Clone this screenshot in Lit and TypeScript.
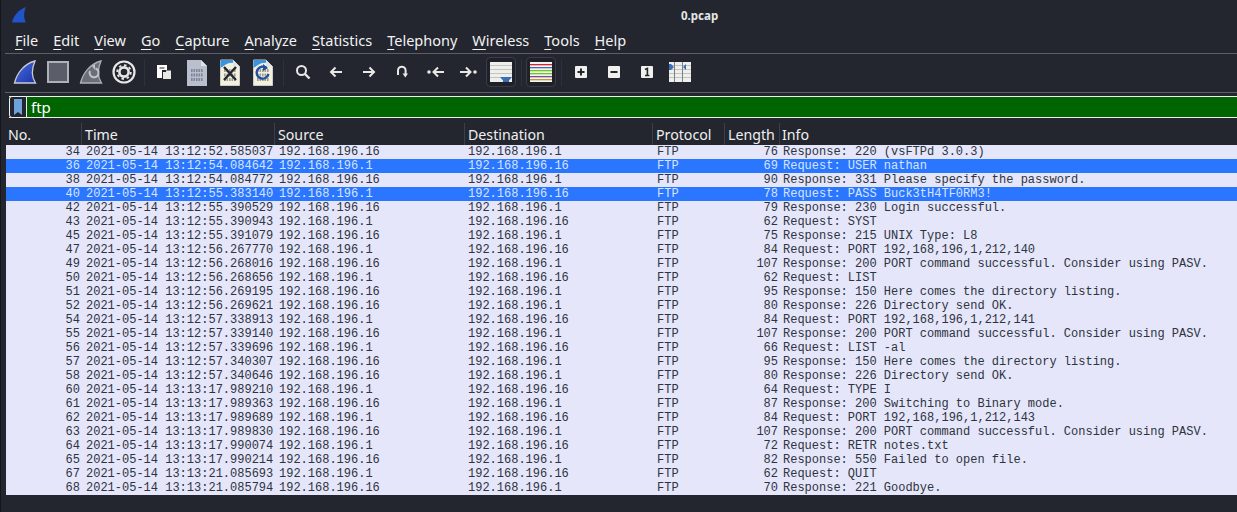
import { LitElement, html, css, svg } from "lit";
import { customElement } from "lit/decorators.js";

const A = "192.168.196.16";
const B = "192.168.196.1";
type R = [number, string, number, string];
const S = (n: number, t: string, l: number, i: string): R => [n, t, l, i];
const rows: R[] = [
  S(34, "13:12:52.585037", 76, "Response: 220 (vsFTPd 3.0.3)"),
  S(36, "13:12:54.084642", 69, "Request: USER nathan"),
  S(38, "13:12:54.084772", 90, "Response: 331 Please specify the password."),
  S(40, "13:12:55.383140", 78, "Request: PASS Buck3tH4TF0RM3!"),
  S(42, "13:12:55.390529", 79, "Response: 230 Login successful."),
  S(43, "13:12:55.390943", 62, "Request: SYST"),
  S(45, "13:12:55.391079", 75, "Response: 215 UNIX Type: L8"),
  S(47, "13:12:56.267770", 84, "Request: PORT 192,168,196,1,212,140"),
  S(49, "13:12:56.268016", 107, "Response: 200 PORT command successful. Consider using PASV."),
  S(50, "13:12:56.268656", 62, "Request: LIST"),
  S(51, "13:12:56.269195", 95, "Response: 150 Here comes the directory listing."),
  S(52, "13:12:56.269621", 80, "Response: 226 Directory send OK."),
  S(54, "13:12:57.338913", 84, "Request: PORT 192,168,196,1,212,141"),
  S(55, "13:12:57.339140", 107, "Response: 200 PORT command successful. Consider using PASV."),
  S(56, "13:12:57.339696", 66, "Request: LIST -al"),
  S(57, "13:12:57.340307", 95, "Response: 150 Here comes the directory listing."),
  S(58, "13:12:57.340646", 80, "Response: 226 Directory send OK."),
  S(60, "13:13:17.989210", 64, "Request: TYPE I"),
  S(61, "13:13:17.989363", 87, "Response: 200 Switching to Binary mode."),
  S(62, "13:13:17.989689", 84, "Request: PORT 192,168,196,1,212,143"),
  S(63, "13:13:17.989830", 107, "Response: 200 PORT command successful. Consider using PASV."),
  S(64, "13:13:17.990074", 72, "Request: RETR notes.txt"),
  S(65, "13:13:17.990214", 82, "Response: 550 Failed to open file."),
  S(67, "13:13:21.085693", 62, "Request: QUIT"),
  S(68, "13:13:21.085794", 70, "Response: 221 Goodbye."),
];
const menus = ["File", "Edit", "View", "Go", "Capture", "Analyze", "Statistics", "Telephony", "Wireless", "Tools", "Help"];
const heads = ["No.", "Time", "Source", "Destination", "Protocol", "Length", "Info"];

const ic = (w: number, h: number, body: unknown) =>
  html`<svg width=${w} height=${h} viewBox="0 0 ${w} ${h}">${body}</svg>`;

const digits = (c: string) => svg`<g fill=${c}>
  ${[10, 14.5, 19].map((y) => [4, 6.5, 9, 11.5, 14].map((x) => svg`<rect x=${x} y=${y} width="1.6" height="3"/>`))}
</g>`;

const fileBase = () => svg`
  <path d="M0.5 1H13L19.5 7.5V26.5H0.5Z" fill="#f3f1dc" stroke="#c9ccd2" stroke-width="1"/>
  <path d="M0.5 1H13L15 4Q9 3 5 6L0.5 9Z" fill="#3b94dc"/>
  <path d="M13 1L19.5 7.5H13Z" fill="#dfe3ea"/>
  ${digits("#9a9c94")}`;

const lines = svg`<rect width="22" height="20" y="0" fill="#eeeeea"/><g fill="#c2c4c2"><rect y="3" width="22" height="1"/><rect y="7" width="22" height="1"/><rect y="11" width="22" height="1"/><rect y="15" width="22" height="1"/></g>`;

const icons: Record<string, unknown> = {
  shark: ic(24, 26, svg`<defs><linearGradient id="g1" x1="0" y1="0" x2="1" y2="1"><stop offset="0" stop-color="#4a6fe0"/><stop offset="1" stop-color="#1c33a8"/></linearGradient></defs>
    <path d="M1.5 24C4 14 11 5 22 2C18.5 10 18.5 18 22.5 24Z" fill="url(#g1)" stroke="#c9ccd4" stroke-width="1.3"/>`),
  stop: ic(22, 22, svg`<rect x="1" y="1" width="20" height="20" fill="#5b5e69" stroke="#aeb1ba" stroke-width="2"/>`),
  restart: ic(24, 26, svg`<path d="M1.5 24C4 14 11 5 22 2C18.5 10 18.5 18 22.5 24Z" fill="#6b6e78" stroke="#aeb1ba" stroke-width="1.3"/>
    <path d="M11 12a4.5 4.5 0 1 0 5.5-2.5" fill="none" stroke="#c0c3ca" stroke-width="2"/><path d="M13 7l3-2v6z" fill="#c0c3ca"/>`),
  gear: ic(24, 24, svg`<circle cx="12" cy="12" r="10.5" fill="none" stroke="#e8e8e6" stroke-width="2.2"/>
    <circle cx="12" cy="12" r="4.6" fill="none" stroke="#e8e8e6" stroke-width="2.6"/>
    <circle cx="12" cy="12" r="6.8" fill="none" stroke="#e8e8e6" stroke-width="1.8" stroke-dasharray="2.6 2.7"/>`),
  open: ic(16, 16, svg`<path d="M1 1H11V6H6V14H1Z" fill="#fff" /><rect x="3.5" y="3.5" width="5" height="1" fill="#23262f"/>
    <path d="M7 8H10V6.5H15V15H7Z" fill="#e8e8e6"/>`),
  grayfile: ic(20, 27, svg`<path d="M0 1H14L20 7V27H0Z" fill="#b9bfcc"/><path d="M14 1L20 7H14Z" fill="#dfe3ea"/>${digits("#7f8595")}`),
  closefile: ic(20, 27, svg`${fileBase()}<path d="M4 8L16 21M16 8L4 21" stroke="#23262f" stroke-width="2.4"/>`),
  reload: ic(20, 27, svg`${fileBase()}<path d="M13.5 9A6 6 0 1 0 15.5 15" fill="none" stroke="#1f4f9e" stroke-width="2.4"/><path d="M10 5L15 9L10 12Z" fill="#1f4f9e"/>`),
  search: ic(16, 16, svg`<circle cx="6.5" cy="6.5" r="4.5" fill="none" stroke="#e8e8e6" stroke-width="2"/><path d="M10 10L14.5 14.5" stroke="#e8e8e6" stroke-width="2.4"/>`),
  back: ic(14, 12, svg`<path d="M13 6H2M6.5 1.5L2 6L6.5 10.5" fill="none" stroke="#e8e8e6" stroke-width="2"/>`),
  fwd: ic(14, 12, svg`<path d="M1 6H12M7.5 1.5L12 6L7.5 10.5" fill="none" stroke="#e8e8e6" stroke-width="2"/>`),
  jump: ic(12, 14, svg`<path d="M2 10V5.5a3.8 3.8 0 0 1 7.6 0V9" fill="none" stroke="#e8e8e6" stroke-width="2"/><path d="M6.5 8.5H12L9.3 12.5Z" fill="#e8e8e6"/>`),
  first: ic(17, 12, svg`<circle cx="2" cy="6" r="1.8" fill="#e8e8e6"/><path d="M17 6H7M11 1.5L6.5 6L11 10.5" fill="none" stroke="#e8e8e6" stroke-width="2"/>`),
  last: ic(17, 12, svg`<circle cx="15" cy="6" r="1.8" fill="#e8e8e6"/><path d="M0 6H10M6 1.5L10.5 6L6 10.5" fill="none" stroke="#e8e8e6" stroke-width="2"/>`),
  scroll: ic(22, 20, svg`${lines}<path d="M10 15H22L19 18.5V20H13V18.5Z" fill="#3a6fb5"/>`),
  colors: ic(22, 20, svg`<rect width="22" height="20" fill="#f4f4f0"/>
    <rect y="2" width="22" height="1.3" fill="#d8232a"/><rect y="5" width="22" height="1.3" fill="#3b6fc0"/><rect y="8" width="22" height="1.3" fill="#6cc81e"/><rect y="11" width="22" height="1.3" fill="#6cc81e"/><rect y="14" width="22" height="1.3" fill="#7a4a9c"/><rect y="17" width="22" height="1.3" fill="#c49a2c"/>`),
  plus: ic(12, 12, svg`<rect width="12" height="12" rx="1" fill="#f0f0ec"/><path d="M6 2.5V9.5M2.5 6H9.5" stroke="#23262f" stroke-width="2"/>`),
  minus: ic(12, 12, svg`<rect width="12" height="12" rx="1" fill="#f0f0ec"/><path d="M2.5 6H9.5" stroke="#23262f" stroke-width="2"/>`),
  one: ic(12, 12, svg`<rect width="12" height="12" rx="1" fill="#f0f0ec"/><path d="M4 3.6L6.4 2.5V9.5M4 9.5H8.4" fill="none" stroke="#23262f" stroke-width="1.6"/>`),
  resize: ic(22, 20, svg`${lines}<rect x="5" width="1" height="20" fill="#7c7f86"/><rect x="13" width="1" height="20" fill="#7c7f86"/>
    <path d="M2 2L5 5L2 8Z M17 2L14 5L17 8Z" fill="#3a6fb5"/><rect y="2" width="2" height="6" fill="#3a6fb5"/>`),
};

const groups: (string | null)[] = [
  "shark", "stop", "restart", "gear", null,
  "open", "grayfile", "closefile", "reload", null,
  "search", "back", "fwd", "jump", "first", "last", "*scroll", null,
  "*colors", null,
  "plus", "minus", "one", "resize",
];

@customElement("app-root")
export class AppRoot extends LitElement {
  static styles = css`
    :host { display: block; width: 1237px; height: 512px; background: #23262f; overflow: hidden; font-family: "Noto Sans", sans-serif; color: #f2f2f2; }
    .app { height: 512px; display: flex; flex-direction: column; border-left: 1px solid #14161b; box-sizing: border-box; }
    .title { height: 30px; display: flex; align-items: center; padding-left: 11px; }
    .title-text { font-size: 11.5px; font-weight: 700; margin-left: 655px; color: #e6e6e6; }
    .menu { height: 23px; display: flex; gap: 15px; padding-left: 14px; font-size: 14.5px; line-height: 21px; }
    .menu u { text-decoration-thickness: 1px; text-underline-offset: 3px; }
    .tb { margin-left: 4px; height: 36px; padding-bottom: 2px; display: flex; align-items: center; padding-left: 3.5px; border-top: 1px solid #5c5f68; border-bottom: 1px solid #5c5f68; }
    .it { width: 33px; height: 33px; display: flex; align-items: center; justify-content: center; flex: none; box-sizing: border-box; }
    .it.on { width: 30px; height: 30px; margin: 0 1.5px; border: 1px solid #3a3d47; border-radius: 4px; background: #1e2129; }
    .sep { width: 7px; height: 27px; flex: none; display: flex; justify-content: center; }
    .sep i { width: 1px; background: #2e3139; }
    .filter { margin: 3px 0 0 8px; height: 22px; display: flex; box-sizing: border-box; background: #006400; border: solid #f0f0f0; border-width: 1px 0; }
    .bm { width: 18px; margin: -1px 0; box-sizing: border-box; border: 1px solid #f0f0f0; border-radius: 3px 0 0 3px; background: #23262f; display: flex; align-items: center; justify-content: center; }
    .q { font-size: 15px; line-height: 21px; padding-left: 4px; color: #fff; }
    .list { margin: 5px 0 0 5px; }
    .hd, .row { display: grid; grid-template-columns: 76px 193px 190px 188px 72px 55px 1fr; }
    .hd { height: 22px; background: #23262f; font-size: 14.2px; line-height: 24px; color: #f0f0f0; }
    .hd span { padding-left: 3px; border-right: 1px solid #3c3f48; white-space: nowrap; overflow: hidden; }
    .hd span:last-child { border-right: 0; padding-left: 2px; }
    .hd span:first-child { padding-left: 2px; }
    .row { height: 14px; background: #e6e6fa; color: #2c3440; font-family: "Liberation Mono", monospace; font-size: 12px; line-height: 14px; white-space: pre; }
    .row.sel { background: #2a76ff; color: #d6e4ff; }
    .row span { padding-left: 4px; overflow: hidden; }
    .row .r { text-align: right; padding: 0 2px 0 0; }
    .row .d, .row .i { padding-left: 3px; }
  `;

  render() {
    return html`<div class="app">
      <div class="title">
        <svg width="14" height="16" viewBox="0 0 14 16"><path d="M0 15.5C1.5 9 6 3 14 0C11.5 5 11.5 11 14 15.5Z" fill="#1f55c8"/></svg>
        <span class="title-text">0.pcap</span>
      </div>
      <div class="menu">${menus.map((m) => html`<span><u>${m[0]}</u>${m.slice(1)}</span>`)}</div>
      <div class="tb">
        ${groups.map((g) =>
          g === null
            ? html`<div class="sep"><i></i></div>`
            : g[0] === "*"
            ? html`<div class="it on">${icons[g.slice(1)]}</div>`
            : html`<div class="it">${icons[g]}</div>`
        )}
      </div>
      <div class="filter">
        <div class="bm"><svg width="10" height="16" viewBox="0 0 10 16"><path d="M1 0H9V16L5 13L1 16Z" fill="#6fa3dc"/></svg></div>
        <div class="q">ftp</div>
      </div>
      <div class="list">
        <div class="hd">${heads.map((h) => html`<span>${h}</span>`)}</div>
        ${rows.map(([n, t, l, i]) => {
          const resp = i.startsWith("Response");
          return html`<div class="row ${n === 36 || n === 40 ? "sel" : ""}">
            <span class="r">${n}</span><span>2021-05-14 ${t}</span><span>${resp ? A : B}</span>
            <span class="d">${resp ? B : A}</span><span>FTP</span><span class="r">${l}</span><span class="i">${i}</span>
          </div>`;
        })}
      </div>
    </div>`;
  }
}
